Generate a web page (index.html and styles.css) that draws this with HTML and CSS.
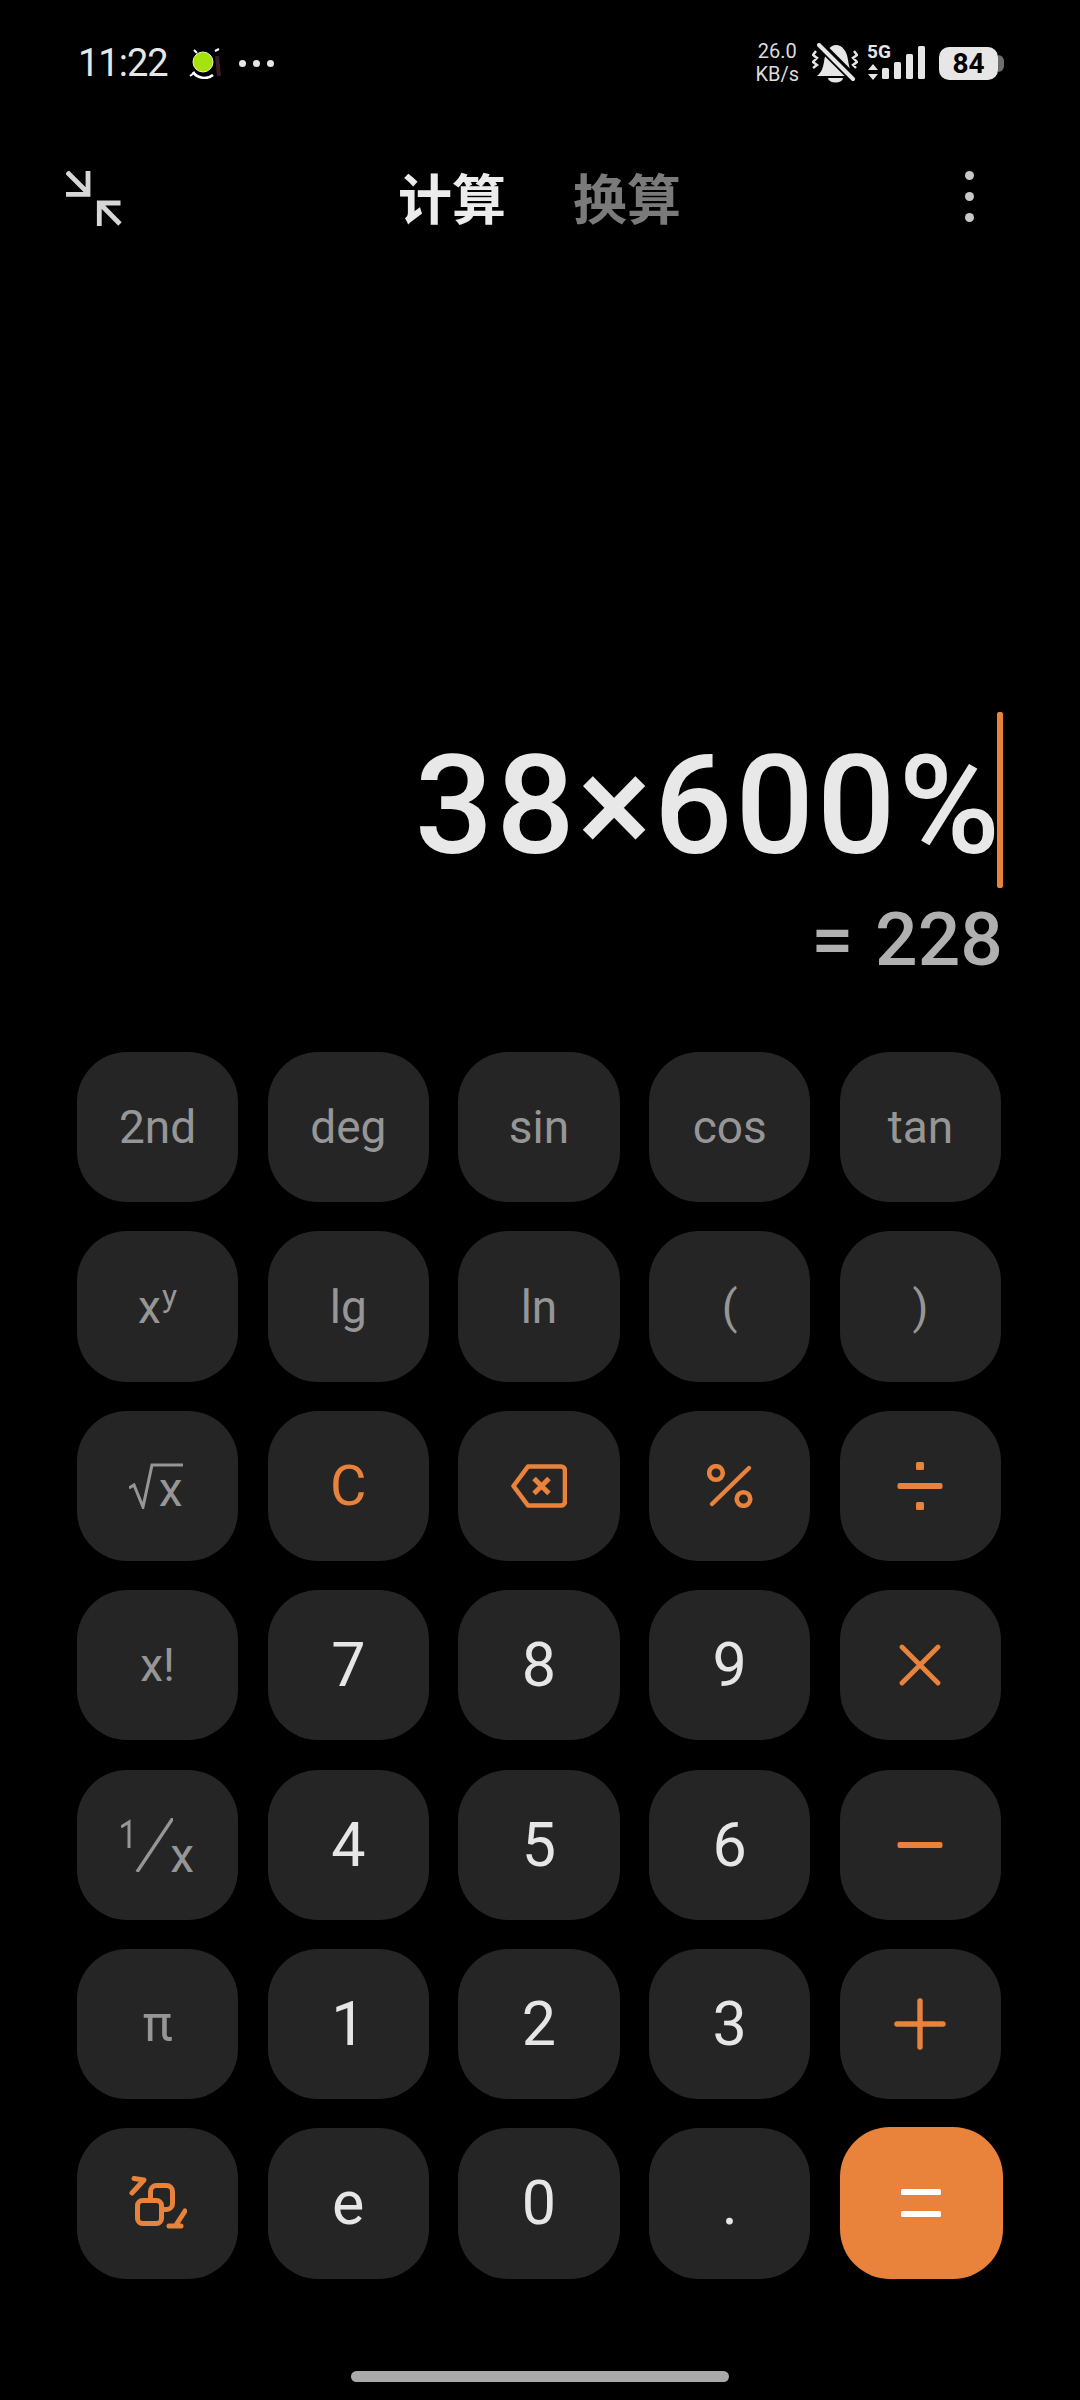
FILE: index.html
```html
<!DOCTYPE html>
<html lang="zh-CN">
<head>
    <meta charset="UTF-8">
    <meta name="viewport" content="width=device-width, initial-scale=1.0">
    <title>计算器</title>
    <link rel="stylesheet" href="styles.css">
</head>
<body>
    <div class="status-bar">
        <div class="status-left">
            <span class="clock">11:22</span>
            <svg class="app-dot" width="32" height="31" viewBox="0 0 32 31">
                <path d="M1 28l4-3 2 3M26 3l4-2M5 2l3 3" stroke="#fff" stroke-width="2" fill="none"/>
                <path d="M4 24a14 14 0 0 0 20 3" stroke="#fff" stroke-width="2.6" fill="none"/>
                <path d="M28 8l2 20" stroke="#3a1c26" stroke-width="4" fill="none"/>
                <circle cx="14" cy="14" r="10" fill="#a6e30c" stroke="#e8f5c0" stroke-width="1"/>
            </svg>
            <span class="more-dots"><i></i><i></i><i></i></span>
        </div>
        <div class="status-right">
            <div class="net-speed"><span>26.0</span><span>KB/s</span></div>
            <svg class="bell" width="46" height="40" viewBox="0 0 46 40">
                <path d="M5 33c5-4 6-9 7-14C13 9 18 2 24 2s11 6 12 15c1 6 2 12 5 16z" fill="#e6e6e6"/>
                <path d="M16 35h15a7.500 4.500 0 0 1-15 0z" fill="#e6e6e6"/>
                <path d="M5 -1l36 36" stroke="#000" stroke-width="9"/>
                <path d="M7 2l34 34" stroke="#e6e6e6" stroke-width="4" stroke-linecap="round"/>
                <path d="M4 8L1 12l4 3-4 4 4 3-4 3M42 8l3 4-4 3 4 4-4 3 3 3" stroke="#e6e6e6" stroke-width="2.4" fill="none"/>
            </svg>
            <div class="signal">
                <span class="signal-text">5G</span>
                <svg width="58" height="38" viewBox="0 0 58 38">
                    <path d="M6 20l5 6H1zM6 36l5-6H1z" fill="#e6e6e6"/>
                    <rect x="15" y="24" width="7" height="11" rx="1.500" fill="#e6e6e6"/>
                    <rect x="27" y="18" width="7" height="17" rx="1.500" fill="#e6e6e6"/>
                    <rect x="39" y="10" width="7" height="25" rx="1.500" fill="#e6e6e6"/>
                    <rect x="51" y="2" width="7" height="33" rx="1.500" fill="#e6e6e6"/>
                </svg>
            </div>
            <div class="battery">
                <div class="battery-body">84</div>
                <div class="battery-cap"></div>
            </div>
        </div>
    </div>

    <div class="top-bar">
        <svg class="collapse" width="56" height="56" viewBox="0 0 56 56">
            <path d="M1 1l21 21M22 0v23.300H0M31 32h23.500M33.300 30v25M33.300 32l20.700 21" stroke="#d6d6d6" stroke-width="4.800" fill="none"/>
        </svg>
        <div class="tabs">
            <span class="tab tab-active">计算</span>
            <span class="tab">换算</span>
        </div>
        <div class="menu"><i></i><i></i><i></i></div>
    </div>

    <div class="display">
        <div class="expression"><span class="expr-text">38×600%</span><span class="cursor"></span></div>
        <div class="result">= 228</div>
    </div>

    <div class="keypad">
        <div class="key fn">2nd</div>
        <div class="key fn">deg</div>
        <div class="key fn">sin</div>
        <div class="key fn">cos</div>
        <div class="key fn">tan</div>

        <div class="key fn">x<sup class="power">y</sup></div>
        <div class="key fn">lg</div>
        <div class="key fn">ln</div>
        <div class="key fn">(</div>
        <div class="key fn">)</div>

        <div class="key fn">
            <svg width="54" height="46" viewBox="0 0 54 46">
                <path d="M0 25l5-3 9 22 9-42h31" stroke="#969696" stroke-width="3" fill="none"/>
            </svg>
            <span class="sqrt-x">x</span>
        </div>
        <div class="key op">C</div>
        <div class="key">
            <svg width="56" height="44" viewBox="0 0 56 44">
                <path d="M17 2.500h33a4 4 0 0 1 4 4v31a4 4 0 0 1-4 4H17L2.500 22z" stroke="#e9823a" stroke-width="4.600" fill="none" stroke-linejoin="round"/>
                <path d="M23 14.500l15 15M38 14.500l-15 15" stroke="#e9823a" stroke-width="5"/>
            </svg>
        </div>
        <div class="key">
            <svg width="46" height="44" viewBox="0 0 46 44">
                <circle cx="9" cy="9" r="6.800" stroke="#e9823a" stroke-width="4.600" fill="none"/>
                <circle cx="36.500" cy="35" r="6.800" stroke="#e9823a" stroke-width="4.600" fill="none"/>
                <path d="M5 40L42 4" stroke="#e9823a" stroke-width="4.400" stroke-linecap="round"/>
            </svg>
        </div>
        <div class="key">
            <svg width="46" height="48" viewBox="0 0 46 48">
                <rect x="0.500" y="21" width="45" height="6" rx="2" fill="#e9823a"/>
                <rect x="19" y="0" width="8" height="8" rx="1.500" fill="#e9823a"/>
                <rect x="19" y="40" width="8" height="8" rx="1.500" fill="#e9823a"/>
            </svg>
        </div>

        <div class="key fn">x!</div>
        <div class="key num">7</div>
        <div class="key num">8</div>
        <div class="key num">9</div>
        <div class="key">
            <svg width="42" height="42" viewBox="0 0 42 42">
                <path d="M3 3l36 36M39 3L3 39" stroke="#e9823a" stroke-width="4.800" stroke-linecap="round"/>
            </svg>
        </div>

        <div class="key fn">
            <svg width="52" height="54" viewBox="0 0 52 54">
                <path d="M0 9l8-5v26" stroke="#969696" stroke-width="3" fill="none"/>
                <path d="M16 54L52 0" stroke="#969696" stroke-width="3.400" fill="none"/>
            </svg>
            <span class="frac-x">x</span>
        </div>
        <div class="key num">4</div>
        <div class="key num">5</div>
        <div class="key num">6</div>
        <div class="key">
            <svg width="46" height="6" viewBox="0 0 46 6">
                <rect x="0.500" y="0" width="45" height="6" rx="2" fill="#e9823a"/>
            </svg>
        </div>

        <div class="key fn key-pi">π</div>
        <div class="key num">1</div>
        <div class="key num">2</div>
        <div class="key num">3</div>
        <div class="key">
            <svg width="52" height="52" viewBox="0 0 52 52">
                <path d="M3 26h46M26 3v46" stroke="#e9823a" stroke-width="5.400" stroke-linecap="round"/>
            </svg>
        </div>

        <div class="key">
            <svg width="58" height="54" viewBox="0 0 58 54">
                <rect x="21.500" y="9.500" width="22" height="24" rx="6" stroke="#e9823a" stroke-width="5" fill="none"/>
                <rect x="8.500" y="24.500" width="24" height="23" rx="5" stroke="#e9823a" stroke-width="5" fill="#252525"/>
                <path d="M5 2.500l10 1.500L3 17M40 50h12M56 35l-9 14" stroke="#e9823a" stroke-width="5" stroke-linecap="round" stroke-linejoin="round" fill="none"/>
            </svg>
        </div>
        <div class="key num">e</div>
        <div class="key num">0</div>
        <div class="key num">.</div>
        <div class="key key-equals">
            <svg width="40" height="28" viewBox="0 0 40 28">
                <rect x="0" y="0" width="40" height="6" rx="1.500" fill="#fff"/>
                <rect x="0" y="22" width="40" height="6" rx="1.500" fill="#fff"/>
            </svg>
        </div>
    </div>

    <div class="home-bar"></div>
</body>
</html>
```
FILE: styles.css
```css
* {
    box-sizing: border-box;
}

html, body {
    margin: 0;
    padding: 0;
}

body {
    width: 1080px;
    height: 2400px;
    overflow: hidden;
    background-color: #000;
    font-family: 'Roboto', 'Noto Sans CJK SC', sans-serif;
    color: #e6e6e6;
}

.status-bar {
    height: 126px;
    padding: 40px 76px 0 78px;
    display: flex;
    justify-content: space-between;
    align-items: flex-start;
}

.status-left {
    display: flex;
    align-items: center;
    height: 46px;
}

.clock {
    font-size: 38px;
    letter-spacing: -1px;
    color: #e6e6e6;
}

.app-dot {
    margin-left: 21px;
}

.more-dots {
    display: flex;
    gap: 7px;
    margin-left: 18px;
}

.more-dots i {
    width: 7px;
    height: 7px;
    border-radius: 50%;
    background-color: #e6e6e6;
}

.status-right {
    display: flex;
    align-items: center;
    height: 46px;
}

.net-speed {
    display: flex;
    flex-direction: column;
    align-items: center;
    font-size: 20px;
    line-height: 23px;
    color: #dcdcdc;
}

.bell {
    margin-left: 13px;
}

.signal {
    position: relative;
    display: flex;
    margin-left: 9px;
}

.signal-text {
    position: absolute;
    left: 0;
    top: -2px;
    font-size: 19px;
    line-height: 19px;
    font-weight: 700;
    color: #e6e6e6;
}

.battery {
    display: flex;
    align-items: center;
    margin-left: 14px;
}

.battery-body {
    width: 59px;
    height: 33px;
    border-radius: 10px;
    background-color: #e6e6e6;
    color: #000;
    font-size: 28px;
    font-weight: 700;
    line-height: 33px;
    text-align: center;
}

.battery-cap {
    width: 6px;
    height: 17px;
    border-radius: 0 6px 6px 0;
    background-color: #6e6e6e;
}

.top-bar {
    height: 580px;
    padding: 45px 106px 0 66px;
    display: flex;
    align-items: flex-start;
}

.collapse {
    flex: none;
}

.tabs {
    display: flex;
    gap: 67px;
    margin-left: 276px;
    margin-top: -1px;
}

.tab {
    font-size: 54px;
    font-weight: 700;
    line-height: 64px;
    color: #7a7a7a;
}

.tab-active {
    color: #ececec;
}

.menu {
    display: flex;
    flex-direction: column;
    gap: 12px;
    margin-left: auto;
}

.menu i {
    width: 9px;
    height: 9px;
    border-radius: 50%;
    background-color: #c8c8c8;
}

.display {
    height: 278px;
    padding-right: 77px;
    display: flex;
    flex-direction: column;
    align-items: flex-end;
}

.expression {
    display: flex;
    align-items: center;
    height: 188px;
}

.expr-text {
    margin: 12px -6px 0 0;
    font-size: 138px;
    font-weight: 500;
    letter-spacing: 3px;
    color: #e8e8e8;
    line-height: 188px;
}

.cursor {
    width: 6px;
    height: 176px;
    border-radius: 2px;
    background-color: #e9823a;
}

.result {
    font-size: 75px;
    font-weight: 500;
    word-spacing: 3px;
    line-height: 90px;
    color: #b0b0b0;
}

.keypad {
    width: 924px;
    margin: 68px 0 0 77px;
    display: grid;
    grid-template-columns: repeat(5, 1fr);
    grid-auto-rows: 150.3px;
    column-gap: 29.5px;
    row-gap: 29.1px;
}

.key {
    display: flex;
    align-items: center;
    justify-content: center;
    background-color: #252525;
    border-radius: 50px;
    font-size: 46px;
    color: #e6e6e6;
}

.key svg {
    display: block;
    flex: none;
}

.fn {
    color: #969696;
}

.key-pi {
    font-size: 50px;
}

.op {
    font-size: 56px;
    color: #e9823a;
}

.num {
    font-size: 61px;
}

.key-equals {
    background-color: #e9823a;
    margin: -1px -2px 0 0;
}

.power {
    font-size: 32px;
    line-height: 0;
    margin-left: 1px;
    position: relative;
    top: -11px;
}

.sqrt-x {
    margin: 8px 4px 0 -24px;
    font-size: 48px;
    line-height: 46px;
}

.frac-x {
    margin: 22px 0 0 -3px;
    font-size: 48px;
    line-height: 46px;
}

.home-bar {
    width: 378px;
    height: 11px;
    margin: 92px 0 0 351px;
    border-radius: 6px;
    background-color: #a9a9a9;
}
```
